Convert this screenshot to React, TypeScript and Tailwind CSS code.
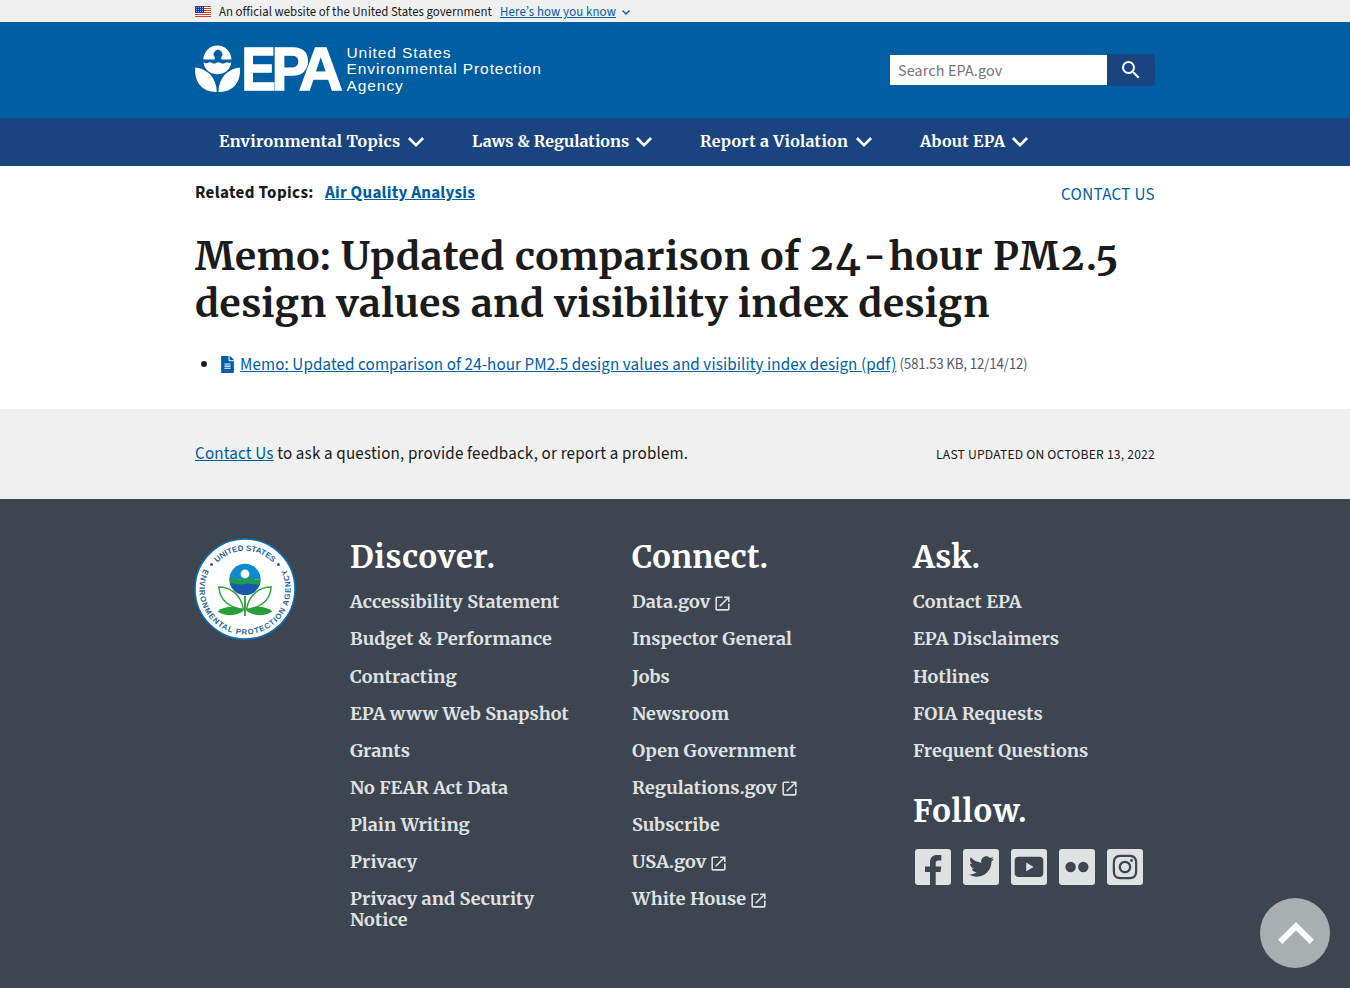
import type { ReactNode } from "react";
import { MdLaunch, MdSearch } from "react-icons/md";
import { FaFileAlt, FaInstagram, FaTwitter } from "react-icons/fa";

type FooterLink = { label: string; external?: boolean };

const navItems = [
  { label: "Environmental Topics", style: "w-[182px] tracking-[0.3px]" },
  { label: "Laws & Regulations", style: "w-[157px] tracking-[0.06px]" },
  { label: "Report a Violation", style: "w-[149px] tracking-[0.32px]" },
  { label: "About EPA", style: "w-[85px] tracking-[0.3px]" },
];

const discover: FooterLink[] = [
  { label: "Accessibility Statement" },
  { label: "Budget & Performance" },
  { label: "Contracting" },
  { label: "EPA www Web Snapshot" },
  { label: "Grants" },
  { label: "No FEAR Act Data" },
  { label: "Plain Writing" },
  { label: "Privacy" },
  { label: "Privacy and Security Notice" },
];

const connect: FooterLink[] = [
  { label: "Data.gov", external: true },
  { label: "Inspector General" },
  { label: "Jobs" },
  { label: "Newsroom" },
  { label: "Open Government" },
  { label: "Regulations.gov", external: true },
  { label: "Subscribe" },
  { label: "USA.gov", external: true },
  { label: "White House", external: true },
];

const ask: FooterLink[] = [
  { label: "Contact EPA" },
  { label: "EPA Disclaimers" },
  { label: "Hotlines" },
  { label: "FOIA Requests" },
  { label: "Frequent Questions" },
];

function Container({ children, className = "" }: { children: ReactNode; className?: string }) {
  return <div className={`mx-auto w-[960px] ${className}`}>{children}</div>;
}

function Flag() {
  return (
    <svg viewBox="0 0 16 11" className="h-[11px] w-4 shrink-0">
      <rect width="16" height="11" fill="#fff" />
      {[0, 2, 4, 6, 8, 10].map((y) => (
        <rect key={y} y={y} width="16" height="1" fill="#db3e1f" />
      ))}
      <rect width="9" height="7" fill="#1e33b1" />
      {[1, 3, 5].map((y) =>
        [1, 3, 5, 7].map((x) => <rect key={`${x}-${y}`} x={x} y={y} width="0.9" height="0.9" fill="#fff" opacity="0.75" />)
      )}
    </svg>
  );
}

function Chevron({ className }: { className: string }) {
  return (
    <svg viewBox="6 8.59 12 7.41" className={className} fill="currentColor">
      <path d="M16.59 8.59 12 13.17 7.41 8.59 6 10l6 6 6-6z" />
    </svg>
  );
}

function Logo() {
  return (
    <div className="flex h-[50px] items-start text-white">
      <svg viewBox="195 45 149 48" className="h-12 w-[149px] overflow-visible" fill="#fff">
        <path d="M203.4 59.6A14 14 0 0 1 231.4 59.6H221.2V57.2A4.3 4.3 0 1 0 214.8 57.2V59.6Z" />
        <path d="M203.5 62.3Q205.6 64 208 62.7Q210 61.6 212 62.9Q214 64.2 216.2 62.9Q218.4 61.6 220.6 62.9Q222.8 64.2 225 62.9Q227 61.8 228.6 62.8Q230 63.4 231.3 62.3C230.6 69 225.4 74.2 217.4 74.2C209.4 74.2 204.2 69 203.5 62.3Z" />
        <path d="M195.2 67.6C207 69 216.4 77 216.8 92C204.6 92.6 194 84.5 195.2 67.6Z" />
        <path d="M240 67.6C228.2 69 218.8 77 218.4 92C230.6 92.6 241.2 84.5 240 67.6Z" />
        <g fontFamily="'Liberation Sans', sans-serif" fontWeight="700" fontSize="61" stroke="#fff" strokeWidth="1.6">
          <text transform="translate(241.5 89.6) scale(0.84 1)">E</text>
          <text transform="translate(271.8 89.6) scale(0.92 1)">P</text>
          <text transform="translate(298.8 89.6) scale(1 1)">A</text>
        </g>
      </svg>
      <div className="pl-[2.5px] font-['Liberation_Sans',sans-serif] text-[15.5px] leading-[16.3px] tracking-[0.92px] whitespace-nowrap">
        United States
        <br />
        Environmental Protection
        <br />
        Agency
      </div>
    </div>
  );
}

function Seal() {
  return (
    <svg viewBox="0 0 102 102" className="-ml-px h-[102px] w-[102px]">
      <defs>
        <path id="ring-top" d="M12.8 51A38.2 38.2 0 0 1 89.2 51" />
        <path id="ring-bottom" d="M11.5 28.2A45.6 45.6 0 1 0 90.5 28.2" />
        <clipPath id="globe">
          <circle cx="51" cy="41.5" r="15.7" />
        </clipPath>
      </defs>
      <circle cx="51" cy="51" r="50" fill="#fff" stroke="#0b6fb8" strokeWidth="1.6" />
      <g fontFamily="'Liberation Sans', sans-serif" fontWeight="700" fill="#2a6399" fontSize="8">
        <text textAnchor="middle">
          <textPath href="#ring-top" startOffset="50%" textLength="62">UNITED STATES</textPath>
        </text>
        <text fontSize="7.8">
          <textPath href="#ring-bottom" startOffset="3" textLength="184">ENVIRONMENTAL PROTECTION AGENCY</textPath>
        </text>
        <circle cx="17.5" cy="26.5" r="1.5" />
        <circle cx="84.5" cy="26.5" r="1.5" />
      </g>
      <g clipPath="url(#globe)">
        <rect x="34" y="24" width="34" height="17" fill="#0c8bd0" />
        <path d="M34 40.5Q38 39 42 40.5T50 40.5T58 40.5T68 40.5V47H34Z" fill="#1f9a50" />
        <path d="M34 46Q38 45 42 46T50 46T58 46T68 46V60H34Z" fill="#1859ac" />
      </g>
      <circle cx="51" cy="36" r="4.4" fill="#fff" />
      <g fill="#fff" stroke="#35a33c" strokeWidth="1.5">
        <path d="M24.8 49C36 49 47 56 49.5 71.5C35 69.5 26 62 24.8 49Z" />
        <path d="M77.2 49C66 49 55 56 52.5 71.5C67 69.5 76 62 77.2 49Z" />
      </g>
      <g fill="#2a9e3b">
        <path d="M23.5 73.5C31 67.5 42 67.5 50 72.5C43 78.5 31 78.5 23.5 73.5Z" />
        <path d="M78.5 73.5C71 67.5 60 67.5 52 72.5C59 78.5 71 78.5 78.5 73.5Z" />
        <rect x="50.1" y="58" width="1.8" height="20" />
      </g>
    </svg>
  );
}

function FooterHeading({ children, className }: { children: ReactNode; className: string }) {
  return (
    <h2 className={`text-[31px] leading-[38px] text-white [font-variation-settings:'opsz'_18] ${className}`}>{children}</h2>
  );
}

function FooterList({ links }: { links: FooterLink[] }) {
  return (
    <ul className="flex flex-col gap-[16.15px] pt-[15.25px] text-[18px] leading-[21px] tracking-[0.08px] text-[#dfe1e2]">
      {links.map((link) => (
        <li key={link.label}>
          <a href="#" className={link.external ? "flex h-[21px] items-center" : "block"}>
            {link.label}
            {link.external && <MdLaunch className="mt-[3px] ml-[3px] size-[19px]" />}
          </a>
        </li>
      ))}
    </ul>
  );
}

function SocialTile({ children }: { children: ReactNode }) {
  return (
    <a href="#" className="flex size-9 items-center justify-center overflow-hidden rounded-[3px] bg-[#dfe1e2] text-[#3d4551]">
      {children}
    </a>
  );
}

export default function App() {
  return (
    <div className="relative h-[988px] overflow-hidden bg-white font-['Source_Sans_3','Noto_Sans_CJK_SC',sans-serif] text-[#1b1b1b]">
      <div className="h-[22px] bg-[#f0f0f0]">
        <Container className="flex h-[22px] items-center text-[12.8px] leading-[20px] whitespace-nowrap">
          <Flag />
          <span className="w-[289px] shrink-0 pt-[2px] pl-2 tracking-[0.02px]">An official website of the United States government</span>
          <a href="#" className="pt-[2px] tracking-[0.14px] text-[#005ea2] underline">Here’s how you know</a>
          <Chevron className="mt-[2px] ml-[6px] h-[5px] w-2 text-[#005ea2]" />
        </Container>
      </div>

      <header className="h-24 bg-[#005ea2]">
        <Container className="flex justify-between pt-[23px]">
          <Logo />
          <form className="mt-[9px] flex h-8">
            <input
              placeholder="Search EPA.gov"
              className="mt-px h-[30px] w-[217px] bg-white px-2 pt-[2px] text-[16px] tracking-[0.15px] placeholder:text-[#757575]"
            />
            <button type="button" className="flex h-8 w-12 items-center justify-center rounded-r bg-[#1a4480] text-white">
              <MdSearch className="size-6" />
            </button>
          </form>
        </Container>
      </header>

      <nav className="h-12 bg-[#1a4480]">
        <Container className="flex h-12 items-center gap-12 pl-6 font-['Merriweather','DejaVu_Serif_Condensed',serif] text-[16px] font-bold text-white">
          {navItems.map((item) => (
            <a key={item.label} href="#" className="flex items-center whitespace-nowrap">
              <span className={`${item.style} pb-[3px]`}>{item.label}</span>
              <Chevron className="ml-[7px] h-[10px] w-4" />
            </a>
          ))}
        </Container>
      </nav>

      <main className="h-[243px]">
        <Container>
          <div className="flex justify-between pt-[15px] text-[17px] leading-[24px]">
            <div className="flex font-bold">
              <span className="w-[130px] tracking-[0.36px]">Related Topics:</span>
              <a href="#" className="tracking-[0.25px] text-[#005ea2] underline">Air Quality Analysis</a>
            </div>
            <a href="#" className="pt-[2px] tracking-[0.32px] text-[#005ea2]">CONTACT US</a>
          </div>
          <h1 className="pt-[26px] font-['Merriweather','DejaVu_Serif_Condensed',serif] text-[39px] leading-[47px] font-bold tracking-[0.37px] whitespace-nowrap oldstyle-nums [font-variation-settings:'opsz'_18]">
            <span className="tracking-[0.6px]">
              Memo: Updated comparison of <span className="tracking-[2.4px]">24</span>
              <span className="tracking-[3px]">-</span>hour <span className="tracking-[1.8px]">PM2.5</span>
            </span>
            <br />
            design values and visibility index design
          </h1>
          <ul className="pt-[25px]">
            <li className="flex h-6 items-center text-[17px] leading-[22px] whitespace-nowrap">
              <span className="ml-[6px] size-[6px] rounded-full bg-[#1b1b1b]" />
              <FaFileAlt className="ml-[14px] h-[17px] w-[13px] text-[#005ea2]" />
              <a href="#" className="ml-[6px] pt-[2px] tracking-[0.1px] text-[#005ea2] underline">
                Memo: Updated comparison of 24-hour PM2.5 design values and visibility index design (pdf)
              </a>
              <span className="ml-[3px] pt-[2px] text-[15px] tracking-[-0.22px] text-[#565c65]">(581.53 KB, 12/14/12)</span>
            </li>
          </ul>
        </Container>
      </main>

      <section className="h-[90px] bg-[#f0f0f0]">
        <Container className="flex h-[90px] items-center justify-between pt-[2px]">
          <p className="text-[17px] tracking-[0.17px]">
            <a href="#" className="text-[#005ea2] underline">Contact Us</a> to ask a question, provide feedback, or report a problem.
          </p>
          <p className="text-[13.6px] tracking-[0.18px]">LAST UPDATED ON OCTOBER 13, 2022</p>
        </Container>
      </section>

      <footer className="h-[489px] bg-[#3d4551] pt-[39px] font-['Merriweather','DejaVu_Serif_Condensed',serif] font-bold">
        <Container className="grid grid-cols-[155px_282px_281px_242px]">
          <Seal />
          <div className="pr-14">
            <FooterHeading className="tracking-[0.65px]">Discover.</FooterHeading>
            <FooterList links={discover} />
          </div>
          <div>
            <FooterHeading className="tracking-[0.2px]">Connect.</FooterHeading>
            <FooterList links={connect} />
          </div>
          <div>
            <FooterHeading className="tracking-[0.3px]">Ask.</FooterHeading>
            <FooterList links={ask} />
            <div className="pt-[30.75px]">
              <FooterHeading className="tracking-[1px]">Follow.</FooterHeading>
            </div>
            <div className="flex gap-3 pt-[19px] pl-[2px]">
              <SocialTile>
                <svg viewBox="0 0 36 36" className="size-9" fill="currentColor">
                  <path d="M15 36V23H10V17.5H15V13.5C15 8.5 17.8 6 22 6H26.3V11.5H23.5C21.4 11.5 20.7 12.4 20.7 14.2V17.5H26.3L25.5 23H20.7V36Z" />
                </svg>
              </SocialTile>
              <SocialTile>
                <FaTwitter className="size-[25px]" />
              </SocialTile>
              <SocialTile>
                <svg viewBox="0 0 36 36" className="size-9">
                  <rect x="3.7" y="7.7" width="28.6" height="20.2" rx="4" fill="currentColor" />
                  <path d="M15.2 13.6V22.2L22.6 17.9Z" fill="#dfe1e2" />
                </svg>
              </SocialTile>
              <SocialTile>
                <svg viewBox="0 0 36 36" className="size-9" fill="currentColor">
                  <circle cx="11.6" cy="18" r="5.2" />
                  <circle cx="24.3" cy="18" r="5.2" />
                </svg>
              </SocialTile>
              <SocialTile>
                <FaInstagram className="size-7" />
              </SocialTile>
            </div>
          </div>
        </Container>
      </footer>

      <a href="#" aria-label="Back to top" className="absolute top-[898px] left-[1260px] flex size-[70px] items-center justify-center rounded-full bg-[#a9aeb1] text-white">
        <svg viewBox="6 8 12 7.41" className="ml-[2px] h-[22px] w-9" fill="currentColor">
          <path d="M7.41 15.41 12 10.83l4.59 4.58L18 14l-6-6-6 6z" />
        </svg>
      </a>
    </div>
  );
}
